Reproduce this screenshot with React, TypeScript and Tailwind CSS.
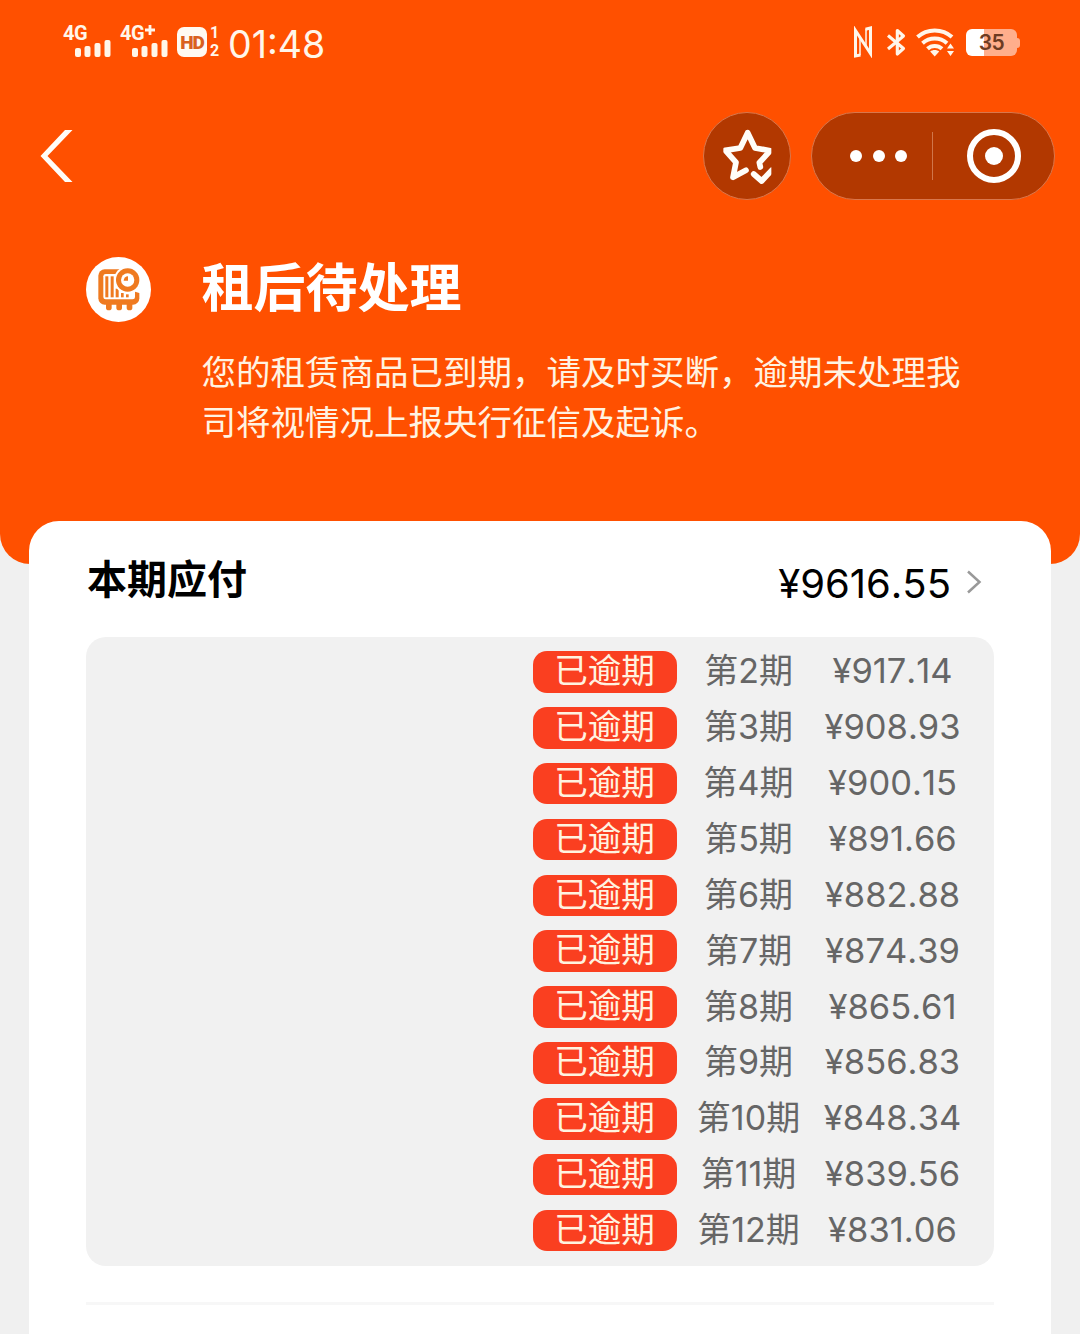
import clsx from "clsx";

const bills = [
  { period: "2", amount: "917.14" },
  { period: "3", amount: "908.93" },
  { period: "4", amount: "900.15" },
  { period: "5", amount: "891.66" },
  { period: "6", amount: "882.88" },
  { period: "7", amount: "874.39" },
  { period: "8", amount: "865.61" },
  { period: "9", amount: "856.83" },
  { period: "10", amount: "848.34" },
  { period: "11", amount: "839.56" },
  { period: "12", amount: "831.06" },
];

const Signal = ({ label, plus, className }: { label: string; plus?: boolean; className?: string }) => (
  <div className={clsx("flex flex-col", className)}>
    <span className="flex font-['Roboto'] text-[20px] font-bold leading-[20px] tracking-[-0.5px]">
      {label}
      {plus && (
        <svg className="mt-[2px] ml-px" width="10" height="10" stroke="currentColor" strokeWidth="2.800">
          <path d="M5 0v10M0 5h10" />
        </svg>
      )}
    </span>
    <svg className="ml-3 -mt-[3px]" width="36" height="17" fill="currentColor">
      <rect x="0" y="8" width="6" height="9" rx="2" />
      <rect x="9.5" y="6" width="6" height="11" rx="2" />
      <rect x="19.5" y="3" width="6" height="14" rx="2" />
      <rect x="29.5" y="0" width="6" height="17" rx="2" />
    </svg>
  </div>
);

const StatusBar = () => (
  <div className="flex h-[84px] items-start pl-[63px] pr-[60px] text-[#fff6ea]">
    <Signal label="4G" className="mt-[23px] w-[57px]" />
    <Signal label="4G" plus className="mt-[23px] w-[57px]" />
    <div className="mt-[27px] flex h-[30px] w-[30px] items-center justify-center rounded-[7px] bg-[#fffaf2] font-['Roboto'] text-[19px] font-black leading-none tracking-[-1px] text-[#d9601f]">
      HD
    </div>
    <div className="mt-[25px] flex w-[15px] flex-col items-center gap-[2px] font-['Roboto'] text-[16px] font-bold leading-[16px]">
      <span>1</span>
      <span>2</span>
    </div>
    <span className="ml-[6px] mt-[23px] text-[37.500px] leading-[44px]">01:48</span>

    <div className="ml-auto flex items-start">
      <svg className="mt-[26px]" width="22" height="32" fill="none" stroke="currentColor" strokeWidth="3">
        <path d="M7.500 29 2.500 30V4.500L17.500 27.500V2l-5 1.200" />
        <path d="M7 12v17M13 3v17" strokeWidth="1.500" />
      </svg>
      <svg className="ml-[11px] mt-[26px]" width="22" height="32" fill="none" stroke="currentColor" strokeWidth="3.100">
        <path d="M2 9.500 17.500 22.500 11.300 28V4.500l6.200 5.500L2 23" strokeLinejoin="round" />
      </svg>
      <svg className="ml-[8px] mt-[27px]" width="40" height="30" fill="none" stroke="currentColor" strokeWidth="4">
        <path d="M1.500 10C11 1.300 26.500 1.300 36 10" />
        <path d="M6.500 16.200c7-6.300 17.500-6.300 24.500 0" />
        <path d="M11.500 21.800c4-3.800 10.500-3.800 14.500 0" />
        <path d="M18.700 29.500l-4.500-5c2.500-2 6.500-2 9 0z" fill="currentColor" stroke="none" />
        <path d="M31 21.500l3.500-5 3.500 5zM31 24h7l-3.500 5z" fill="currentColor" stroke="none" />
      </svg>
      <div className="ml-[10px] mt-[29px] flex items-center">
        <div className="flex h-[27px] w-[51px] items-center justify-center rounded-[6px] bg-linear-to-r from-white from-35% to-[#ffae8c] to-35% text-[21px] font-semibold leading-none tracking-[-0.500px] text-[#6d3b22]">
          35
        </div>
        <div className="h-[10px] w-[3px] rounded-r-sm bg-[#ffae8c]" />
      </div>
    </div>
  </div>
);

const NavBar = () => (
  <div className="mt-[28px] flex h-[88px] items-center pl-[40px] pr-[25px] text-[#fffdf8]">
    <svg width="33" height="54" fill="currentColor">
      <path d="M25 1h7.500L7.500 27l25 26H25L.5 27z" />
    </svg>
    <div className="ml-auto h-[88px] w-[88px] rounded-full border border-[#d9774c] bg-[#b23800]">
      <svg
        width="86"
        height="86"
        viewBox="41 39 258 258"
        fill="none"
        stroke="currentColor"
        strokeWidth="17"
        strokeLinecap="round"
        strokeLinejoin="round"
      >
        <clipPath id="star">
          <path d="M99 80h144v180H99z" />
        </clipPath>
        <g clipPath="url(#star)">
          <path d="M210 201 207 188 240 152 194 144 172 98 150 144 105 151 137 187 128 232 167 211" />
          <path d="M190 222 214 243 244 211" />
        </g>
      </svg>
    </div>
    <div className="ml-5 flex h-[88px] w-[244px] items-center rounded-full border border-[#d9774c] bg-[#b23800]">
      <div className="flex w-[120px] items-center gap-[10.500px] pl-[38px]">
        <span className="h-3 w-3 rounded-full bg-white" />
        <span className="h-3 w-3 rounded-full bg-white" />
        <span className="h-3 w-3 rounded-full bg-white" />
      </div>
      <div className="h-12 w-px bg-[#d0764a]" />
      <div className="-mt-px ml-[34px] flex h-[54px] w-[54px] items-center justify-center rounded-full border-[6.500px] border-white">
        <span className="h-[18px] w-[18px] rounded-full bg-white" />
      </div>
    </div>
  </div>
);

const Logo = () => (
  <svg className="mt-[1px] shrink-0" width="65" height="65" viewBox="48 51 195 195">
    <circle cx="145.500" cy="148.500" r="97.500" fill="#fff" />
    <g fill="#ef7a20">
      <path d="M108 188h17v16a8.500 7 0 0 1-17 0zM139 188h17v16a8.500 7 0 0 1-17 0zM170 188h17v16a8.500 7 0 0 1-17 0z" />
      <rect x="85" y="88" width="123" height="106" rx="19" />
    </g>
    <rect x="100" y="102" width="95" height="76" rx="7" fill="#fff" />
    <g fill="#ef7a20">
      <rect x="106" y="109" width="9" height="63" />
      <rect x="122" y="109" width="9" height="63" />
      <rect x="137" y="146" width="9" height="26" />
      <rect x="153" y="159" width="8" height="13" />
      <rect x="168" y="163" width="8" height="9" />
    </g>
    <path d="M186 152l24-14v22z" fill="#fff" />
    <circle cx="173" cy="120" r="41" fill="#fff" />
    <circle cx="173" cy="120" r="35" fill="#ef7a20" />
    <circle cx="173" cy="120" r="20" fill="#fff" />
    <path d="M174 109v13h-13a13 13 0 0 1 13-13z" fill="#ef7a20" />
  </svg>
);

const Header = () => (
  <header className="h-[564px] rounded-b-[30px] bg-[#ff5000]">
    <StatusBar />
    <NavBar />
    <div className="mt-14 flex pl-[86px] text-white">
      <Logo />
      <div className="ml-[50.500px]">
        <h1 className="mt-[2px] text-[52px] font-bold leading-[62px]">租后待处理</h1>
        <p className="mt-[28px] w-[765px] text-[34.500px] leading-[50px] text-[#fff3e2]">
          您的租赁商品已到期，请及时买断，逾期未处理我
          <br />
          司将视情况上报央行征信及起诉。
        </p>
      </div>
    </div>
  </header>
);

const App = () => {
  return (
    <div className="h-[1334px] w-[1080px] overflow-hidden bg-[#f0f0f0] font-['Inter','Noto_Sans_CJK_SC',sans-serif]">
      <Header />
      <main className="relative mx-[29px] -mt-[43px] h-[813px] rounded-t-[30px] bg-white px-[57px] pt-[30px]">
        <div className="flex h-[62px] items-center">
          <h2 className="mb-1 ml-px text-[40px] font-bold leading-[60px] text-black">本期应付</h2>
          <span className="ml-auto mt-1 text-[40px] leading-[60px] text-black [font-kerning:none]">¥9616.55</span>
          <svg className="ml-[15px] mr-[12px]" width="16" height="24" fill="none" stroke="#999" strokeWidth="2.500">
            <path d="M2 1.500 13.500 12 2 22.500" />
          </svg>
        </div>
        <ul className="mt-6 h-[629px] rounded-[20px] bg-[#f1f1f1] pr-[29.500px] pt-[7px] text-[#666]">
          {bills.map(({ period, amount }) => (
            <li key={period} className="flex h-[55.870px] items-center justify-end text-center text-[34px]">
              <span className="h-[41.500px] w-36 rounded-[14px] bg-[#fa3f20] text-[33.600px] leading-[39px] text-[#fff3e0]">
                已逾期
              </span>
              <span className="mb-px w-36 leading-[40px]">第{period}期</span>
              <span className="mb-px w-36 text-[34.500px] leading-[40px] [font-kerning:none]">¥{amount}</span>
            </li>
          ))}
        </ul>
        <div className="mt-9 h-[3px] bg-[#f7f7f7]" />
      </main>
    </div>
  );
};

export default App;
